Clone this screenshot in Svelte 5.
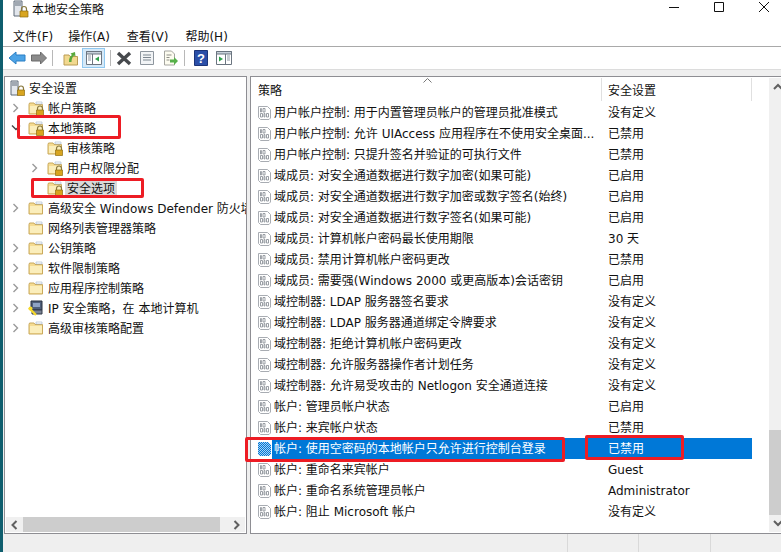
<script>
  const tree = [
    { label: "安全设置", depth: 0, icon: "server", arrow: "" },
    { label: "帐户策略", depth: 1, icon: "lock", arrow: "right" },
    { label: "本地策略", depth: 1, icon: "lock", arrow: "down" },
    { label: "审核策略", depth: 2, icon: "lock", arrow: "" },
    { label: "用户权限分配", depth: 2, icon: "lock", arrow: "right" },
    { label: "安全选项", depth: 2, icon: "lock", arrow: "", selected: true },
    { label: "高级安全 Windows Defender 防火墙", depth: 1, icon: "folder", arrow: "right" },
    { label: "网络列表管理器策略", depth: 1, icon: "folder", arrow: "" },
    { label: "公钥策略", depth: 1, icon: "folder", arrow: "right" },
    { label: "软件限制策略", depth: 1, icon: "folder", arrow: "right" },
    { label: "应用程序控制策略", depth: 1, icon: "folder", arrow: "right" },
    { label: "IP 安全策略，在 本地计算机", depth: 1, icon: "ip", arrow: "right" },
    { label: "高级审核策略配置", depth: 1, icon: "folder", arrow: "right" },
  ];

  const policies = [
    ["用户帐户控制: 用于内置管理员帐户的管理员批准模式", "没有定义"],
    ["用户帐户控制: 允许 UIAccess 应用程序在不使用安全桌面...", "已禁用"],
    ["用户帐户控制: 只提升签名并验证的可执行文件", "已禁用"],
    ["域成员: 对安全通道数据进行数字加密(如果可能)", "已启用"],
    ["域成员: 对安全通道数据进行数字加密或数字签名(始终)", "已启用"],
    ["域成员: 对安全通道数据进行数字签名(如果可能)", "已启用"],
    ["域成员: 计算机帐户密码最长使用期限", "30 天"],
    ["域成员: 禁用计算机帐户密码更改", "已禁用"],
    ["域成员: 需要强(Windows 2000 或更高版本)会话密钥", "已启用"],
    ["域控制器: LDAP 服务器签名要求", "没有定义"],
    ["域控制器: LDAP 服务器通道绑定令牌要求", "没有定义"],
    ["域控制器: 拒绝计算机帐户密码更改", "没有定义"],
    ["域控制器: 允许服务器操作者计划任务", "没有定义"],
    ["域控制器: 允许易受攻击的 Netlogon 安全通道连接", "没有定义"],
    ["帐户: 管理员帐户状态", "已启用"],
    ["帐户: 来宾帐户状态", "已禁用"],
    ["帐户: 使用空密码的本地帐户只允许进行控制台登录", "已禁用"],
    ["帐户: 重命名来宾帐户", "Guest"],
    ["帐户: 重命名系统管理员帐户", "Administrator"],
    ["帐户: 阻止 Microsoft 帐户", "没有定义"],
  ];
  const selectedRow = 16;
</script>

{#snippet folder()}
  <path d="M1 4.500 1.500 3H6l1 1.500h7.500V14H1z" fill="#f5dc92" stroke="#c9a95c" />
  <path d="M2 6h12v7H2z" fill="#fbeebb" />
  <path d="M8 2h6v2H8z" fill="#fff" stroke="#9fb4c9" stroke-width=".6" />
{/snippet}

{#snippet lockBadge()}
  <path d="M9.500 10V8.500a2.500 2.500 0 0 1 5 0V10" fill="none" stroke="#8a7a40" stroke-width="1.2" />
  <path d="M8.500 10h7v5.500h-7z" fill="#d8a520" stroke="#8f6d10" stroke-width=".7" />
{/snippet}

{#snippet nodeIcon(kind)}
  <svg class="node-icon" viewBox="0 0 16 16" width="16" height="16" aria-hidden="true">
    {#if kind === "server"}
      <path d="M2 1h7v14H2z" fill="#e4e8ee" stroke="#5f6b78" />
      <path d="M3 3h5M3 5h5" stroke="#5f6b78" />
      {@render lockBadge()}
    {:else if kind === "ip"}
      <path d="M3 1h11v9H3z" fill="#4f5f7a" stroke="#29303f" />
      <path d="M5 3h7v4H5z" fill="#8fa3c4" />
      <path d="M4 10h10v4H4z" fill="#7a8394" stroke="#333b48" />
      <path d="M1 8l7 7" stroke="#f6d92c" stroke-width="2.4" />
      <circle cx="2.500" cy="8.500" r="2" fill="#f6d92c" />
    {:else}
      {@render folder()}
      {#if kind === "lock"}{@render lockBadge()}{/if}
    {/if}
  </svg>
{/snippet}

{#snippet policyIcon(active)}
  <svg class="policy-icon" viewBox="0 0 14 16" width="14" height="16" aria-hidden="true">
    {#if active}
      <path d="M0 1h10l3 3v9l-2 2H2l-2-2z" fill="#a9d2f3" />
      <path d="M0 1h10l3 3v9l-2 2H2l-2-2z" fill="url(#sel-dither)" shape-rendering="crispEdges" />
    {:else}
      <path d="M.500 1.500h9l3 3v8.500l-1.500 1.500H2.500l-2-2z" fill="#fff" stroke="#a8acb2" />
      <path d="M2.500 3.500h.9v3.500h-.9zM5 3.500h2v3.500H5zM2.500 8.500h2v3.500h-2zM6 8.500h.9v3.500H6zM8.500 8.500h2v3.500h-2z" fill="none" stroke="#8f949b" stroke-width=".9" />
    {/if}
  </svg>
{/snippet}

<div class="window">
  <div class="desktop-edge"></div>
  <div class="app">
    <header class="titlebar">
      <svg class="app-icon" viewBox="0 0 16 18" width="16" height="18" aria-hidden="true">
        <path d="M1 1h8v15H1z" fill="#e2e6ec" stroke="#5f6b78" />
        <path d="M2 3h6M2 5h6" stroke="#5f6b78" />
        <path d="M8.500 11V9a2.500 2.500 0 0 1 5 0v2" fill="none" stroke="#8a7a40" stroke-width="1.2" />
        <path d="M7 11h8v6H7z" fill="#d8a520" stroke="#8f6d10" stroke-width=".7" />
      </svg>
      <span class="title">本地安全策略</span>
      <div class="win-controls">
        <svg viewBox="0 0 10 10" width="10" height="10"><path d="M0 5.500h10" stroke="#111" /></svg>
        <svg viewBox="0 0 10 10" width="10" height="10"><path d="M.5.500h9v9h-9z" fill="none" stroke="#111" /></svg>
        <svg viewBox="0 0 10 10" width="10" height="10"><path d="M0 0l10 10M10 0 0 10" stroke="#111" /></svg>
      </div>
    </header>

    <nav class="menubar">
      <span class="first">文件(F)</span><span>操作(A)</span><span>查看(V)</span><span>帮助(H)</span>
    </nav>

    <div class="toolbar">
      <svg viewBox="0 0 18 16" width="18" height="16"><path d="M1 8l7-6v3h9v6H8v3z" fill="#4da3e6" stroke="#2b7fc4" /></svg>
      <svg viewBox="0 0 16 16" width="16" height="16"><path d="M15.500 8l-6-6v3H.5v6h9v3z" fill="#8b8b8b" stroke="#6b6b6b" /></svg>
      <i class="sep"></i>
      <svg class="ml5" viewBox="0 0 16 16" width="16" height="16">
        <path d="M1 5h5l1 1.500h7.500V15H1z" fill="#f2d98f" stroke="#bb9c55" />
        <path d="M6 12c0-4 1-6 3-7L7.500 3.500 12 2l.5 4.500L11 5.500C9.500 7 8.500 9 8.500 12z" fill="#58a83a" />
      </svg>
      <span class="tool-active">
        <svg viewBox="0 0 16 14" width="16" height="14">
          <path d="M.5.500h15v13H.5z" fill="#fff" stroke="#6b7580" />
          <path d="M.5.500h15v2.500H.5z" fill="#c8d1da" stroke="#6b7580" />
          <path d="M6.500 3v10" stroke="#6b7580" />
          <path d="M2 5h3M2 7h3M2 9h3" stroke="#8f98a3" />
          <path d="M13 5.500v5L9 8z" fill="#2ea14a" />
        </svg>
      </span>
      <i class="sep"></i>
      <svg viewBox="0 0 16 16" width="16" height="16"><path d="M2 3l12 11M14 3 2 14" stroke="#46494d" stroke-width="3.400" /></svg>
      <svg class="ml2" viewBox="0 0 16 16" width="16" height="16">
        <path d="M1.500 1.500h13v13h-13z" fill="#f2f4f6" stroke="#8e969e" />
        <path d="M4 5h8M4 7.500h8M4 10h8" stroke="#7d8790" />
      </svg>
      <svg class="ml2" viewBox="0 0 16 16" width="16" height="16">
        <path d="M2.500 1h7l3 3v11h-10z" fill="#fdfcf0" stroke="#a5a5a0" />
        <path d="M4.500 5h5M4.500 7.500h3M4.500 10h3" stroke="#8e8e88" />
        <path d="M8 9.500h4V7l4 4-4 4v-2.500H8z" fill="#57b04a" />
      </svg>
      <i class="sep ml1"></i>
      <svg class="ml4" viewBox="0 0 14 16" width="14" height="16">
        <path d="M.5.500h13v15H.5z" fill="#2b4fa8" stroke="#1c3478" />
        <text x="7" y="13" text-anchor="middle" font-size="13" font-weight="700" fill="#fff" font-family="Liberation Sans, sans-serif">?</text>
      </svg>
      <svg class="ml3" viewBox="0 0 16 14" width="16" height="14">
        <path d="M.5.500h15v13H.5z" fill="#fff" stroke="#6b7580" />
        <path d="M.5.500h15v2.500H.5z" fill="#c8d1da" stroke="#6b7580" />
        <path d="M9.500 3v10" stroke="#6b7580" />
        <path d="M11 5h3M11 7h3M11 9h3" stroke="#8f98a3" />
        <path d="M3 5.500v5L7 8z" fill="#2ea14a" />
      </svg>
    </div>

    <div class="panes">
      <aside class="tree-pane">
        <div class="tree">
          {#each tree as node}
            <div class="tree-row depth-{node.depth}">
              <span class="arrow">
                {#if node.arrow === "right"}
                  <svg viewBox="0 0 8 10" width="8" height="10"><path d="M1.500 1l4 4-4 4" fill="none" stroke="#9a9a9a" stroke-width="1.400" /></svg>
                {:else if node.arrow === "down"}
                  <svg viewBox="0 0 10 8" width="10" height="8"><path d="M1 1.500l4 4 4-4" fill="none" stroke="#444" stroke-width="1.400" /></svg>
                {/if}
              </span>
              {@render nodeIcon(node.icon)}
              <span class="node-label" class:selected={node.selected}>{node.label}</span>
            </div>
          {/each}
        </div>
        <div class="hscroll">
          <svg viewBox="0 0 8 10" width="8" height="10"><path d="M6 1 2 5l4 4" fill="none" stroke="#606060" stroke-width="2" /></svg>
          <div class="hthumb"></div>
          <svg viewBox="0 0 8 10" width="8" height="10"><path d="M2 1l4 4-4 4" fill="none" stroke="#606060" stroke-width="2" /></svg>
        </div>
      </aside>

      <section class="list-pane">
        <div class="list">
          <div class="list-head">
            <div class="col-name">
              策略
              <svg class="sort" viewBox="0 0 9 5" width="9" height="5"><path d="M.5 4.500l4-4 4 4" fill="none" stroke="#777" /></svg>
            </div>
            <div class="col-value">安全设置</div>
          </div>
          {#each policies as row, i}
            <div class="list-row" class:active={i === selectedRow}>
              {@render policyIcon(i === selectedRow)}
              <span class="row-name">{row[0]}</span>
              <span class="row-value">{row[1]}</span>
            </div>
          {/each}
        </div>
        <div class="vscroll">
          <svg viewBox="0 0 10 8" width="10" height="8"><path d="M1 6l4-4 4 4" fill="none" stroke="#606060" stroke-width="2" /></svg>
          <div class="vtrack"><div class="vthumb"></div></div>
          <svg viewBox="0 0 10 8" width="10" height="8"><path d="M1 2l4 4 4-4" fill="none" stroke="#606060" stroke-width="2" /></svg>
        </div>
      </section>
    </div>

    <footer class="statusbar"><i></i><i></i><i></i></footer>
  </div>

  <!-- red markup boxes drawn on top of the screenshot -->
  <div class="mark mark-local"></div>
  <div class="mark mark-options"></div>
  <div class="mark mark-policy"></div>
  <div class="mark mark-value"></div>

  <svg class="defs" width="0" height="0" aria-hidden="true">
    <defs>
      <pattern id="sel-dither" width="2" height="2" patternUnits="userSpaceOnUse">
        <rect width="1" height="1" fill="#0078d7" />
        <rect x="1" y="1" width="1" height="1" fill="#0078d7" />
      </pattern>
    </defs>
  </svg>
</div>

<style>
  :global(body) {
    margin: 0;
  }

  .window {
    position: relative;
    display: flex;
    width: 781px;
    height: 552px;
    overflow: hidden;
    background: #fff;
    font-family: "DejaVu Sans", "Noto Sans CJK SC", sans-serif;
    font-size: 12px;
    color: #111;
  }

  .desktop-edge {
    width: 3px;
    background: #0f5e6e;
    flex-shrink: 0;
  }

  .app {
    flex: 1;
    min-width: 0;
    display: flex;
    flex-direction: column;
  }

  .titlebar {
    height: 23px;
    display: flex;
    align-items: center;
    padding: 0 0 5px 10px;
    box-sizing: border-box;
    gap: 3px;
    flex-shrink: 0;
  }

  .title {
    line-height: 16px;
    padding-top: 2px;
  }

  .win-controls {
    margin-left: auto;
    margin-top: -4px;
    display: flex;
    gap: 35px;
    padding-right: 12px;
  }

  .menubar {
    height: 24px;
    display: flex;
    align-items: center;
    gap: 17px;
    padding: 2px 0 0 10px;
    box-sizing: border-box;
    border-bottom: 1px solid #a9a9a9;
    flex-shrink: 0;
  }

  .menubar .first {
    margin-right: -2px;
  }

  .toolbar {
    height: 22px;
    display: flex;
    align-items: center;
    padding-left: 5px;
    gap: 5px;
    border-bottom: 1px solid #dcdcdc;
    flex-shrink: 0;
  }

  .ml1 {
    margin-left: 1px;
  }

  .ml2 {
    margin-left: 2px;
  }

  .ml3 {
    margin-left: 3px;
  }

  .ml4 {
    margin-left: 4px;
  }

  .ml5 {
    margin-left: 5px;
  }

  .sep {
    width: 1px;
    height: 16px;
    background: #b8b8b8;
  }

  .tool-active {
    width: 23px;
    height: 20px;
    margin-left: -2px;
    display: flex;
    align-items: center;
    justify-content: center;
    background: #d5e9f8;
    border: 1px solid #90c8f0;
    box-sizing: border-box;
  }

  .panes {
    flex: 1;
    min-height: 0;
    display: flex;
    gap: 3px;
    padding: 6px 0 0 1px;
    background: #efefef;
  }

  .tree-pane,
  .list-pane {
    display: flex;
    background: #fff;
    border: 1px solid #8e8e93;
    box-sizing: border-box;
  }

  .tree-pane {
    width: 243px;
    flex-direction: column;
    flex-shrink: 0;
  }

  .tree {
    flex: 1;
    padding-top: 1px;
    overflow: hidden;
  }

  .tree-row {
    height: 20px;
    display: flex;
    align-items: center;
    white-space: nowrap;
  }

  .arrow {
    width: 15px;
    display: flex;
    justify-content: center;
    flex-shrink: 0;
  }

  .depth-0 {
    padding-left: 1px;
  }

  .depth-0 .arrow {
    display: none;
  }

  .depth-1 {
    padding-left: 3px;
  }

  .depth-2 {
    padding-left: 22px;
  }

  .node-icon {
    flex-shrink: 0;
    margin-left: 5px;
  }

  .depth-0 .node-icon {
    margin-left: 3px;
  }

  .node-label {
    padding: 2px 2px 0;
    margin-left: 2px;
    line-height: 16px;
  }

  .node-label.selected {
    background: #d9d9d9;
  }

  .hscroll {
    height: 15px;
    margin: 0 1px 1px;
    display: flex;
    align-items: center;
    background: #f0f0f0;
  }

  .hscroll svg {
    width: 17px;
    flex-shrink: 0;
  }

  .hthumb {
    flex: 1;
    height: 100%;
    margin-right: 8px;
    background: #cdcdcd;
  }

  .list-pane {
    flex: 1;
    min-width: 0;
    border-right: 0;
  }

  .list {
    flex: 1;
    min-width: 0;
  }

  .list-head {
    height: 25px;
    display: flex;
    align-items: center;
  }

  .col-name,
  .col-value {
    height: 23px;
    margin-bottom: 1px;
    display: flex;
    align-items: center;
    box-sizing: border-box;
    border-right: 1px solid #e0e0e0;
    flex-shrink: 0;
  }

  .col-name {
    position: relative;
    width: 351px;
    padding-left: 7px;
  }

  .sort {
    position: absolute;
    left: 172px;
    top: 0;
  }

  .col-value {
    width: 150px;
    padding-left: 6px;
  }

  .list-row {
    width: 501px;
    height: 21px;
    display: flex;
    align-items: center;
    white-space: nowrap;
    padding-left: 7px;
    box-sizing: border-box;
  }

  .policy-icon {
    flex-shrink: 0;
    align-self: flex-start;
    margin-top: 3px;
  }

  .row-name {
    width: 332px;
    padding: 1px 0 0 2px;
    box-sizing: border-box;
    flex-shrink: 0;
    overflow: hidden;
    line-height: 20px;
  }

  .row-value {
    flex: 1;
    padding: 1px 0 0 4px;
    line-height: 20px;
  }

  .list-row.active .row-name,
  .list-row.active .row-value {
    background: #0078d7;
    color: #fff;
  }

  .vscroll {
    width: 17px;
    flex-shrink: 0;
    display: flex;
    flex-direction: column;
    align-items: center;
    background: #f0f0f0;
    padding: 5px 0 5px;
    box-sizing: border-box;
    margin: 1px -5px 1px 0;
  }

  .vtrack {
    flex: 1;
    width: 100%;
    position: relative;
  }

  .vthumb {
    position: absolute;
    left: 0;
    right: 0;
    top: 339px;
    bottom: 4px;
    background: #cdcdcd;
  }

  .statusbar {
    height: 18px;
    display: flex;
    background: #efefef;
    flex-shrink: 0;
    padding-left: 564px;
  }

  .statusbar i {
    width: 132px;
    border-left: 1px solid #d9d9d9;
  }

  .mark {
    position: absolute;
    border: 3px solid #ed1c24;
    border-radius: 2px;
    box-sizing: border-box;
    pointer-events: none;
  }

  .mark-local {
    left: 17px;
    top: 115px;
    width: 104px;
    height: 24px;
  }

  .mark-options {
    left: 31px;
    top: 178px;
    width: 113px;
    height: 20px;
  }

  .mark-policy {
    left: 245px;
    top: 437px;
    width: 320px;
    height: 25px;
  }

  .mark-value {
    left: 585px;
    top: 435px;
    width: 99px;
    height: 25px;
  }

  .defs {
    position: absolute;
  }
</style>
